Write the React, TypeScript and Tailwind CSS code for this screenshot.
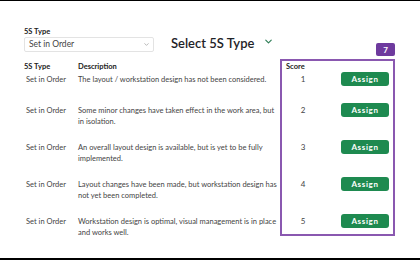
import { ChevronDown } from "lucide-react";

const rows = [
  { type: "Set in Order", desc: "The layout / workstation design has not been considered.", score: 1, h: "h-[31px]" },
  { type: "Set in Order", desc: "Some minor changes have taken effect in the work area, but in isolation.", score: 2, h: "h-[37px]" },
  { type: "Set in Order", desc: "An overall layout design is available, but is yet to be fully implemented.", score: 3, h: "h-[37px]" },
  { type: "Set in Order", desc: "Layout changes have been made, but workstation design has not yet been completed.", score: 4, h: "h-[37px]" },
  { type: "Set in Order", desc: "Workstation design is optimal, visual management is in place and works well.", score: 5, h: "h-[22px]" },
];

const App = () => {
  return (
    <div className="w-[420px] h-[260px] bg-white border-t border-black border-b-2 overflow-hidden font-['Lato','Open_Sans',sans-serif]">
      <div className="pl-[24px] pt-[26px]">
        {/* select row */}
        <div className="flex items-end">
          <div className="w-[130px]">
            <p className="text-[7.5px] leading-[9px] font-bold text-[#222]">5S Type</p>
            <div className="mt-[1px] h-[15px] border border-[#e3e3e3] rounded-[2px] flex items-center justify-between pl-[4px] pr-[3px]">
              <span className="text-[8.5px] text-[#444]">Set in Order</span>
              <ChevronDown className="w-[7px] h-[7px] text-[#888]" strokeWidth={2} />
            </div>
          </div>
          <h1 className="ml-[17px] mb-[1px] text-[13px] leading-[16px] font-semibold text-[#1f2328]">Select 5S Type</h1>
          <ChevronDown className="ml-[9px] mb-[5px] w-[11px] h-[11px] text-[#2e7d56]" strokeWidth={2.5} />
        </div>

        {/* table */}
        <div className="mt-[7px] flex">
          <div className="w-[256px] pt-[2px]">
            <div className="flex h-[11px] items-center text-[7.5px] font-bold text-[#222]">
              <span className="w-[54px]">5S Type</span>
              <span>Description</span>
            </div>
            {rows.map((r) => (
              <div key={r.score} className={`flex items-start ${r.h}`}>
                <span className="w-[54px] pl-[2px] pt-[2px] text-[7.5px] leading-[11px] text-[#444]">{r.type}</span>
                <span className="w-[202px] pt-[2px] text-[7.5px] leading-[11px] text-[#444]">{r.desc}</span>
              </div>
            ))}
          </div>
          <div className="relative w-[115px] h-[177px] border-2 border-[#8a58b0] bg-white">
            <span className="absolute -top-[18px] -right-[2px] w-[19px] h-[13px] rounded-[2px] bg-[#6e3a9e] text-white text-[8px] font-bold flex items-center justify-center">7</span>
            <div className="h-[11px] pl-[4px] flex items-center text-[7.5px] font-bold text-[#222]">Score</div>
            {rows.map((r) => (
              <div key={r.score} className={`flex items-start ${r.h}`}>
                <span className="w-[38px] pl-[4px] pt-[2px] text-center text-[8px] leading-[11px] text-[#444]">{r.score}</span>
                <button className="ml-[21px] w-[48px] h-[14px] rounded-[3px] bg-[#1e8a50] text-white text-[8px] font-bold tracking-[0.08em] flex items-center justify-center">
                  Assign
                </button>
              </div>
            ))}
          </div>
        </div>
      </div>
    </div>
  );
};

export default App;
